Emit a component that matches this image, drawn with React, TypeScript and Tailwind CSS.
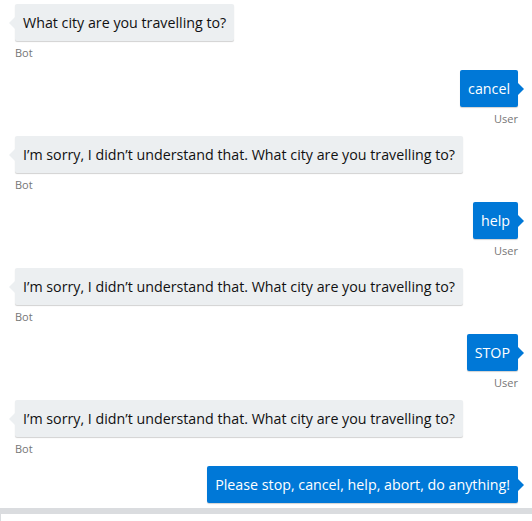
import React from 'react';

type Msg = { from: 'bot' | 'user'; text: string };

const messages: Msg[] = [
  { from: 'bot', text: 'What city are you travelling to?' },
  { from: 'user', text: 'cancel' },
  { from: 'bot', text: 'I’m sorry, I didn’t understand that. What city are you travelling to?' },
  { from: 'user', text: 'help' },
  { from: 'bot', text: 'I’m sorry, I didn’t understand that. What city are you travelling to?' },
  { from: 'user', text: 'STOP' },
  { from: 'bot', text: 'I’m sorry, I didn’t understand that. What city are you travelling to?' },
  { from: 'user', text: 'Please stop, cancel, help, abort, do anything!' },
];

function Bubble({ msg, last }: { msg: Msg; last: boolean }) {
  const isUser = msg.from === 'user';
  return (
    <div className={`flex flex-col ${isUser ? 'items-end pr-[14px]' : 'items-start pl-[15px]'} ${last ? '' : 'mb-[9px]'}`}>
      <div
        className={`relative px-2 py-2 text-[14.25px] leading-[21px] rounded-[2px] shadow-[0_1px_1px_rgba(0,0,0,0.18)] ${
          isUser ? 'bg-[#0078d7] text-white' : 'bg-[#eceff1] text-[#111]'
        }`}
      >
        {msg.text}
        {/* callout nub */}
        {isUser ? (
          <span className="absolute top-1/2 -translate-y-1/2 right-[-6px] w-0 h-0 border-y-[6px] border-y-transparent border-l-[6px] border-l-[#0078d7]" />
        ) : (
          <span className="absolute top-1/2 -translate-y-1/2 left-[-6px] w-0 h-0 border-y-[6px] border-y-transparent border-r-[6px] border-r-[#eceff1]" />
        )}
      </div>
      {!last && (
        <div className="mt-1 h-4 text-[11px] leading-4 text-[#767676]">
          {isUser ? 'User' : 'Bot'}
        </div>
      )}
    </div>
  );
}

export default function App() {
  return (
    <div
      className="w-[532px] h-[521px] bg-white overflow-hidden flex flex-col"
      style={{ fontFamily: '"Open Sans", "Noto Sans", sans-serif' }}
    >
      <div className="pt-1 pb-[5px]">
        {messages.map((m, i) => (
          <Bubble key={i} msg={m} last={i === messages.length - 1} />
        ))}
      </div>
      <div className="flex-1 border-t-[6px] border-l border-[#dadcdf]" />
    </div>
  );
}
